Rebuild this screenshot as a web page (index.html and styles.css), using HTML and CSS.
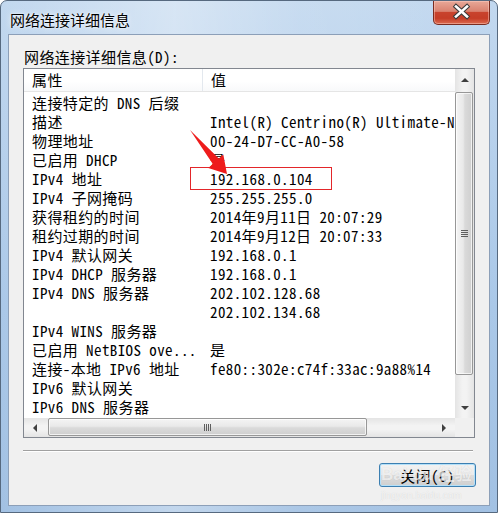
FILE: index.html
```html
<!DOCTYPE html>
<html lang="zh-CN">
<head>
  <meta charset="UTF-8">
  <title>网络连接详细信息</title>
  <link rel="stylesheet" href="styles.css">
</head>
<body>

  <div class="window">
    <!-- Title bar -->
    <div class="titlebar">
      <span class="title">网络连接详细信息</span>
      <div class="close-btn">
        <svg width="57" height="23" viewBox="0 0 57 23">
          <path d="M23 6.5 L34 16.5 M34 6.5 L23 16.5" stroke="#3a3a3a" stroke-width="4.6" stroke-linecap="square"/>
          <path d="M23 6.5 L34 16.5 M34 6.5 L23 16.5" stroke="#fff" stroke-width="2.6" stroke-linecap="square"/>
        </svg>
      </div>
    </div>

    <!-- Client area -->
    <div class="client">
      <div class="label">网络连接详细信息(D):</div>

      <div class="listview">
        <div class="lv-body">
          <div class="lv-header">
            <div class="col1">属性</div>
            <div class="col2">值</div>
          </div>
          <div class="lv-rows">
            <div class="lv-row"><span class="col1">连接特定的 DNS 后缀</span><span class="col2"></span></div>
            <div class="lv-row"><span class="col1">描述</span><span class="col2">Intel(R) Centrino(R) Ultimate-N</span></div>
            <div class="lv-row"><span class="col1">物理地址</span><span class="col2">00-24-D7-CC-A0-58</span></div>
            <div class="lv-row"><span class="col1">已启用 DHCP</span><span class="col2">是</span></div>
            <div class="lv-row"><span class="col1">IPv4 地址</span><span class="col2">192.168.0.104</span></div>
            <div class="lv-row"><span class="col1">IPv4 子网掩码</span><span class="col2">255.255.255.0</span></div>
            <div class="lv-row"><span class="col1">获得租约的时间</span><span class="col2">2014年9月11日 20:07:29</span></div>
            <div class="lv-row"><span class="col1">租约过期的时间</span><span class="col2">2014年9月12日 20:07:33</span></div>
            <div class="lv-row"><span class="col1">IPv4 默认网关</span><span class="col2">192.168.0.1</span></div>
            <div class="lv-row"><span class="col1">IPv4 DHCP 服务器</span><span class="col2">192.168.0.1</span></div>
            <div class="lv-row"><span class="col1">IPv4 DNS 服务器</span><span class="col2">202.102.128.68</span></div>
            <div class="lv-row"><span class="col1"></span><span class="col2">202.102.134.68</span></div>
            <div class="lv-row"><span class="col1">IPv4 WINS 服务器</span><span class="col2"></span></div>
            <div class="lv-row"><span class="col1">已启用 NetBIOS ove...</span><span class="col2">是</span></div>
            <div class="lv-row"><span class="col1">连接-本地 IPv6 地址</span><span class="col2">fe80::302e:c74f:33ac:9a88%14</span></div>
            <div class="lv-row"><span class="col1">IPv6 默认网关</span><span class="col2"></span></div>
            <div class="lv-row"><span class="col1">IPv6 DNS 服务器</span><span class="col2"></span></div>
          </div>

          <!-- annotation drawn over the list -->
          <div class="mark-box"></div>
          <svg class="mark-arrow" width="60" height="60" viewBox="0 0 60 60">
            <polygon points="6,6 34.8,34.6 39.3,30.6 43,50 24.3,43.9 28.8,39.9" fill="#ee1c1c"/>
          </svg>
        </div>

        <div class="vscroll">
          <div class="sb-btn"><span class="arrow-up"></span></div>
          <div class="sb-track">
            <div class="v-thumb"><span class="grip-h"></span></div>
          </div>
          <div class="sb-btn"><span class="arrow-down"></span></div>
        </div>

        <div class="hscroll">
          <div class="sb-btn-h"><span class="arrow-left"></span></div>
          <div class="sb-track-h">
            <div class="h-thumb"><span class="grip-v"></span></div>
          </div>
          <div class="sb-btn-h"><span class="arrow-right"></span></div>
        </div>

        <div class="sb-corner"></div>
      </div>

      <div class="separator"></div>

      <div class="btn-row">
        <button class="dlg-btn">关闭(C)</button>
      </div>

      <div class="watermark">
        <div class="wm-logo">Bai du 经验</div>
        <div class="wm-url">jingyan.baidu.com</div>
      </div>
    </div>
  </div>

</body>
</html>
```

FILE: styles.css
```css
/* General */
body {
  margin: 0;
  background-color: #fff;
  font-family: "Noto Sans Mono CJK SC", "Noto Sans CJK SC", "Liberation Mono", monospace;
  font-feature-settings: "hwid";
  font-size: 15px;
  letter-spacing: 0.4px;
  color: #000;
}

/* Window frame */
.window {
  width: 498px;
  height: 513px;
  box-sizing: border-box;
  border: 1px solid #56697f;
  border-radius: 7px 7px 0 0;
  display: flex;
  flex-direction: column;
  background:
    linear-gradient(to right, rgba(255, 255, 255, 0) 0%, rgba(255, 255, 255, 0.35) 35%, rgba(255, 255, 255, 0.1) 60%, rgba(255, 255, 255, 0) 100%),
    linear-gradient(#c2d8ef, #aac8e8 60%, #a2c1e3);
  overflow: hidden;
}

.titlebar {
  height: 33px;
  flex-shrink: 0;
  display: flex;
  justify-content: space-between;
  align-items: flex-start;
}

.title {
  margin: 9px 0 0 9px;
  line-height: 19px;
  font-family: "Noto Sans CJK SC", sans-serif;
  letter-spacing: 0;
  text-shadow: 0 0 6px rgba(255, 255, 255, 0.9), 0 0 2px rgba(255, 255, 255, 0.9);
}

.close-btn {
  width: 57px;
  height: 24px;
  margin-right: 7px;
  box-sizing: border-box;
  border: 1px solid #7a2c20;
  border-top: none;
  border-radius: 0 0 5px 5px;
  background: linear-gradient(#e8a898 0%, #d98270 45%, #c8432d 50%, #c53d27 75%, #dc6a4f 100%);
  box-shadow: inset 0 0 0 1px rgba(255, 210, 200, 0.45);
}

.close-btn svg {
  display: block;
  margin: -1px 0 0 -1px;
}

/* Client area */
.client {
  position: relative;
  flex: 1;
  margin: 0 7px 6px 7px;
  border: 1px solid #8c9fb8;
  background-color: #f0f0f0;
  padding: 12px 14px 0 14px;
}

.label {
  line-height: 19px;
  padding-left: 1px;
  margin-bottom: 2px;
}

/* List view */
.listview {
  width: 452px;
  height: 370px;
  box-sizing: border-box;
  border: 1px solid #828790;
  background-color: #fff;
  display: grid;
  grid-template-columns: 431px 19px;
  grid-template-rows: 349px 19px;
}

.lv-body {
  position: relative;
  overflow: hidden;
  white-space: nowrap;
}

.lv-header {
  height: 23px;
  box-sizing: border-box;
  display: flex;
  border-bottom: 1px solid #e5e5e5;
  background: linear-gradient(#fff, #fff 55%, #f8f9fa);
  line-height: 22px;
}

.lv-header .col1 {
  border-right: 1px solid #e3e8ee;
  box-sizing: border-box;
}

.lv-rows {
  padding-top: 1px;
}

.lv-row {
  display: flex;
  height: 19px;
  line-height: 19px;
}

.col1 {
  width: 179px;
  flex-shrink: 0;
  padding-left: 8px;
  box-sizing: border-box;
  overflow: hidden;
}

.col2 {
  padding-left: 7px;
}

.lv-header .col2 {
  padding-left: 8px;
}

/* Red annotation */
.mark-box {
  position: absolute;
  left: 166px;
  top: 98px;
  width: 142px;
  height: 23px;
  box-sizing: border-box;
  border: 1px solid #e3262a;
}

.mark-arrow {
  position: absolute;
  left: 160px;
  top: 55px;
}

/* Scrollbars */
.vscroll {
  display: flex;
  flex-direction: column;
  background: linear-gradient(to right, #e4e4e4, #f3f3f3 40%, #f3f3f3 60%, #e4e4e4);
}

.sb-btn {
  height: 21px;
  flex-shrink: 0;
  display: flex;
  align-items: center;
  justify-content: center;
}

.sb-track {
  flex: 1;
}

.v-thumb {
  margin: 2px 1px 0 0;
  height: 283px;
  box-sizing: border-box;
  border: 1px solid #979797;
  border-radius: 2px;
  background: linear-gradient(to right, #f4f4f4, #e9e9e9 45%, #dadada 55%, #cfcfcf);
  box-shadow: inset 0 0 0 1px rgba(255, 255, 255, 0.7);
  display: flex;
  align-items: center;
  justify-content: center;
}

.grip-h {
  width: 7px;
  height: 7px;
  background: repeating-linear-gradient(#5e5e5e 0 1px, transparent 1px 2px);
}

.hscroll {
  display: flex;
  background: linear-gradient(#e4e4e4, #f3f3f3 40%, #f3f3f3 60%, #e4e4e4);
}

.sb-btn-h {
  width: 22px;
  flex-shrink: 0;
  display: flex;
  align-items: center;
  justify-content: center;
}

.sb-track-h {
  flex: 1;
}

.h-thumb {
  margin: 0 0 1px 2px;
  width: 319px;
  height: 18px;
  box-sizing: border-box;
  border: 1px solid #979797;
  border-radius: 2px;
  background: linear-gradient(#f4f4f4, #e9e9e9 45%, #dadada 55%, #cfcfcf);
  box-shadow: inset 0 0 0 1px rgba(255, 255, 255, 0.7);
  display: flex;
  align-items: center;
  justify-content: center;
}

.grip-v {
  width: 7px;
  height: 7px;
  background: repeating-linear-gradient(to right, #5e5e5e 0 1px, transparent 1px 2px);
}

.arrow-up, .arrow-down, .arrow-left, .arrow-right {
  width: 0;
  height: 0;
}

.arrow-up {
  border-left: 4px solid transparent;
  border-right: 4px solid transparent;
  border-bottom: 4px solid #404040;
}

.arrow-down {
  border-left: 4px solid transparent;
  border-right: 4px solid transparent;
  border-top: 4px solid #404040;
}

.arrow-left {
  border-top: 4px solid transparent;
  border-bottom: 4px solid transparent;
  border-right: 4px solid #404040;
}

.arrow-right {
  border-top: 4px solid transparent;
  border-bottom: 4px solid transparent;
  border-left: 4px solid #404040;
}

.sb-corner {
  background-color: #f0f0f0;
}

/* Bottom of dialog */
.separator {
  width: 450px;
  margin-top: 12px;
  border-top: 1px solid #a0a0a0;
  border-bottom: 1px solid #fff;
}

.btn-row {
  display: flex;
  justify-content: flex-end;
  margin: 11px -1px 0 0;
}

.dlg-btn {
  width: 97px;
  height: 24px;
  padding: 0;
  font-family: inherit;
  font-size: 15px;
  letter-spacing: 0.4px;
  color: #000;
  border: 1px solid #3c7fb1;
  border-radius: 3px;
  background: linear-gradient(#f2f2f2, #ebebeb 50%, #dddddd 51%, #cfcfcf);
  box-shadow: inset 0 0 0 1px #b3e0f9;
}

.watermark {
  position: absolute;
  left: 372px;
  top: 430px;
  color: rgba(255, 255, 255, 0.7);
  text-shadow: 0 0 1px rgba(0, 0, 0, 0.15);
  font-family: "Liberation Sans", "Noto Sans CJK SC", sans-serif;
  letter-spacing: 0;
  pointer-events: none;
}

.wm-logo {
  font-size: 17px;
  font-weight: bold;
  line-height: 20px;
}

.wm-url {
  font-size: 10px;
  line-height: 12px;
  margin-top: 5px;
}
```
